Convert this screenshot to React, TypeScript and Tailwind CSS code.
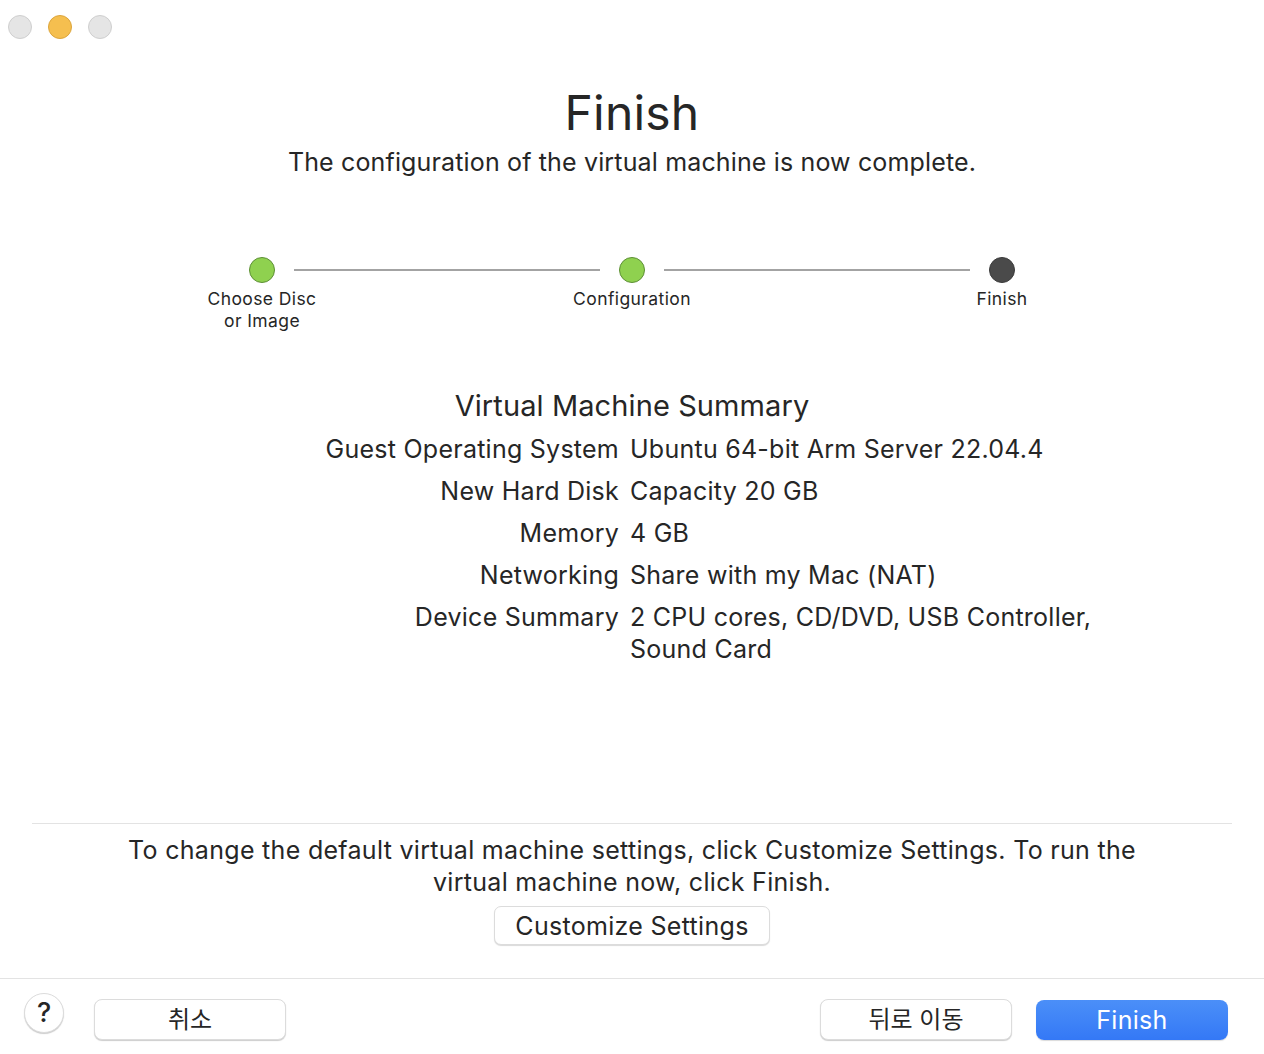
import React from "react";

const font = { fontFamily: "Inter, 'Noto Sans CJK KR', sans-serif" };

function Step({ label, color, border }: { label: React.ReactNode; color: string; border: string }) {
  return (
    <div className="flex flex-col items-center w-[140px]">
      <div className={`w-[26px] h-[26px] rounded-full border ${color} ${border}`} />
      <div className="mt-[5px] text-[17.5px] leading-[22px] text-center text-[#262626] tracking-[0.4px]">{label}</div>
    </div>
  );
}

const rows: [string, React.ReactNode][] = [
  ["Guest Operating System", "Ubuntu 64-bit Arm Server 22.04.4"],
  ["New Hard Disk", "Capacity 20 GB"],
  ["Memory", "4 GB"],
  ["Networking", "Share with my Mac (NAT)"],
  ["Device Summary", <>2 CPU cores, CD/DVD, USB Controller,<br />Sound Card</>],
];

export default function App() {
  return (
    <div className="w-[1264px] h-[1054px] bg-white flex flex-col text-[#262626] overflow-hidden" style={font}>
      {/* title bar */}
      <div className="flex items-center gap-[16px] pl-[8px] pt-[14px] h-[40px]">
        <div className="w-[24px] h-[24px] rounded-full bg-[#e5e5e5] border border-[#cfcfcf]" />
        <div className="w-[24px] h-[24px] rounded-full bg-[#f5bf4f] border border-[#dca53d]" />
        <div className="w-[24px] h-[24px] rounded-full bg-[#e5e5e5] border border-[#cfcfcf]" />
      </div>

      <div className="flex flex-col items-center mt-[43px]">
        <div className="text-[48px] leading-[60px] font-normal tracking-[0.2px]">Finish</div>
        <div className="text-[25px] leading-[30px] mt-[4px] tracking-[0.15px]">The configuration of the virtual machine is now complete.</div>
      </div>

      {/* steps */}
      <div className="flex items-start justify-center mt-[80px]">
        <Step label={<>Choose Disc<br />or Image</>} color="bg-[#8fd14f]" border="border-[#5c8f34]" />
        <div className="h-[2px] w-[306px] bg-[#a3a3a3] mt-[12px] ml-[-38px] mr-[-38px]" />
        <Step label="Configuration" color="bg-[#8fd14f]" border="border-[#5c8f34]" />
        <div className="h-[2px] w-[306px] bg-[#a3a3a3] mt-[12px] ml-[-38px] mr-[-38px]" />
        <Step label="Finish" color="bg-[#4a4a4a]" border="border-[#3a3a3a]" />
      </div>

      {/* summary */}
      <div className="flex flex-col items-center mt-[56px]">
        <div className="text-[29px] leading-[36px] tracking-[0.1px]">Virtual Machine Summary</div>
        <div className="grid grid-cols-[619px_1fr] gap-x-[11px] gap-y-[10px] mt-[9px] w-full text-[25px] leading-[32px] tracking-[0.25px]">
          {rows.map(([k, v], i) => (
            <React.Fragment key={i}>
              <div className="text-right">{k}</div>
              <div className="text-left">{v}</div>
            </React.Fragment>
          ))}
        </div>
      </div>

      <div className="flex-1" />

      {/* bottom info */}
      <div className="mx-[32px] border-t border-[#e3e3e3]" />
      <div className="flex flex-col items-center pt-[10px] pb-[33px]">
        <div className="text-[25px] leading-[32px] text-center tracking-[0.3px]">
          To change the default virtual machine settings, click Customize Settings. To run the
          <br />
          virtual machine now, click Finish.
        </div>
        <button className="mt-[8px] h-[39px] w-[276px] rounded-[7px] bg-white border border-[#dcdcdc] shadow-[0_1px_1px_rgba(0,0,0,0.15)] text-[25px] leading-[30px] tracking-[0.3px]">
          Customize Settings
        </button>
      </div>

      <div className="border-t border-[#e3e3e3]" />
      <div className="flex items-center h-[75px] pt-[6px]">
        <div className="ml-[24px] mt-[-14px] w-[40px] h-[40px] rounded-full bg-white border border-[#dcdcdc] shadow-[0_1px_1px_rgba(0,0,0,0.2)] flex items-center justify-center text-[27px] font-medium leading-none">
          ?
        </div>
        <button className="ml-[30px] w-[192px] h-[41px] rounded-[8px] bg-white border border-[#dcdcdc] shadow-[0_1px_1px_rgba(0,0,0,0.2)] text-[24px] leading-[30px]">
          취소
        </button>
        <div className="flex-1" />
        <button className="w-[192px] h-[41px] rounded-[8px] bg-white border border-[#dcdcdc] shadow-[0_1px_1px_rgba(0,0,0,0.2)] text-[24px] leading-[30px]">
          뒤로 이동
        </button>
        <button className="ml-[24px] mr-[36px] w-[192px] h-[40px] rounded-[8px] bg-gradient-to-b from-[#4b8ff8] to-[#3478f6] text-white text-[25px] leading-[30px] font-normal tracking-[0.3px] shadow-[0_1px_1px_rgba(0,0,0,0.15)]">
          Finish
        </button>
      </div>
    </div>
  );
}
